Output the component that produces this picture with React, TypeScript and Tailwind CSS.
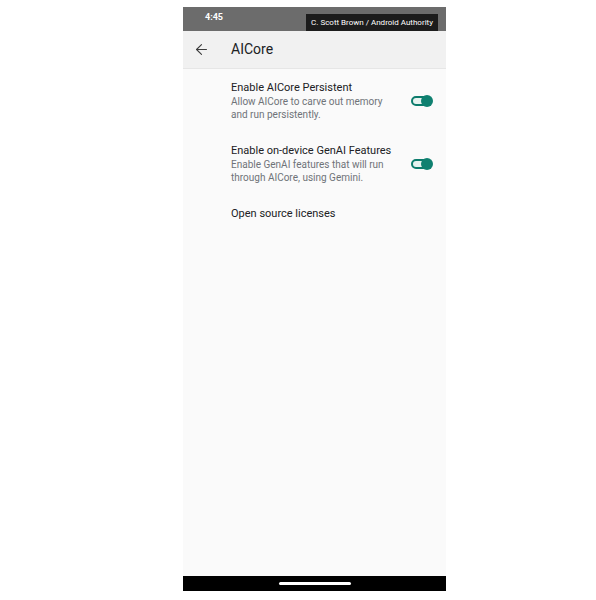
import { ArrowLeft } from 'lucide-react'

function Toggle() {
  return (
    <div className="relative w-[22px] h-[14px] flex items-center">
      <div className="w-[18px] h-[10px] rounded-full border-2 border-[#0c7b6c] bg-[#e6f2ef]" />
      <div className="absolute right-0 top-[1px] w-[12px] h-[12px] rounded-full bg-[#0f8070]" />
    </div>
  )
}

function SettingRow({ title, desc }: { title: string; desc?: string }) {
  return (
    <div className="flex items-center pl-[48px] pr-[13px]">
      <div className="flex-1">
        <div className="text-[11px] leading-[14px] text-[#202124]">{title}</div>
        {desc && (
          <div className="mt-[1px] text-[10px] leading-[12.5px] text-[#6f7378] pr-[20px]">{desc}</div>
        )}
      </div>
      {desc && <Toggle />}
    </div>
  )
}

export default function App() {
  return (
    <div className="w-[596px] h-[600px] bg-white" style={{ fontFamily: 'Roboto, "Noto Sans", sans-serif' }}>
      <div className="ml-[183px] pt-[7px]">
        <div className="w-[263px] h-[584px] flex flex-col bg-[#fafafa]">
          <div className="h-[24px] bg-[#6c6c6c] flex items-center justify-between pl-[22px] pr-[8px] relative">
            <span className="text-[9px] font-bold text-white -mt-[2px]">4:45</span>
            <div className="self-end h-[17px] px-[5px] bg-[#1c1c1c] flex items-center">
              <span className="text-[8px] text-white whitespace-nowrap">C. Scott Brown / Android Authority</span>
            </div>
          </div>
          <div className="h-[38px] bg-[#f1f1f1] flex items-center border-b border-[#e6e6e6]">
            <ArrowLeft className="ml-[10px] w-[17px] h-[17px] text-[#3c3c3c]" strokeWidth={1.5} />
            <span className="ml-[21px] text-[14px] text-[#202124]">AICore</span>
          </div>
          <div className="flex-1 flex flex-col pt-[12px]">
            <SettingRow title="Enable AICore Persistent" desc="Allow AICore to carve out memory and run persistently." />
            <div className="h-[23px]" />
            <SettingRow title="Enable on-device GenAI Features" desc="Enable GenAI features that will run through AICore, using Gemini." />
            <div className="h-[23px]" />
            <SettingRow title="Open source licenses" />
          </div>
          <div className="h-[15px] bg-black flex items-center justify-center">
            <div className="w-[72px] h-[3px] rounded-full bg-white" />
          </div>
        </div>
      </div>
    </div>
  )
}
